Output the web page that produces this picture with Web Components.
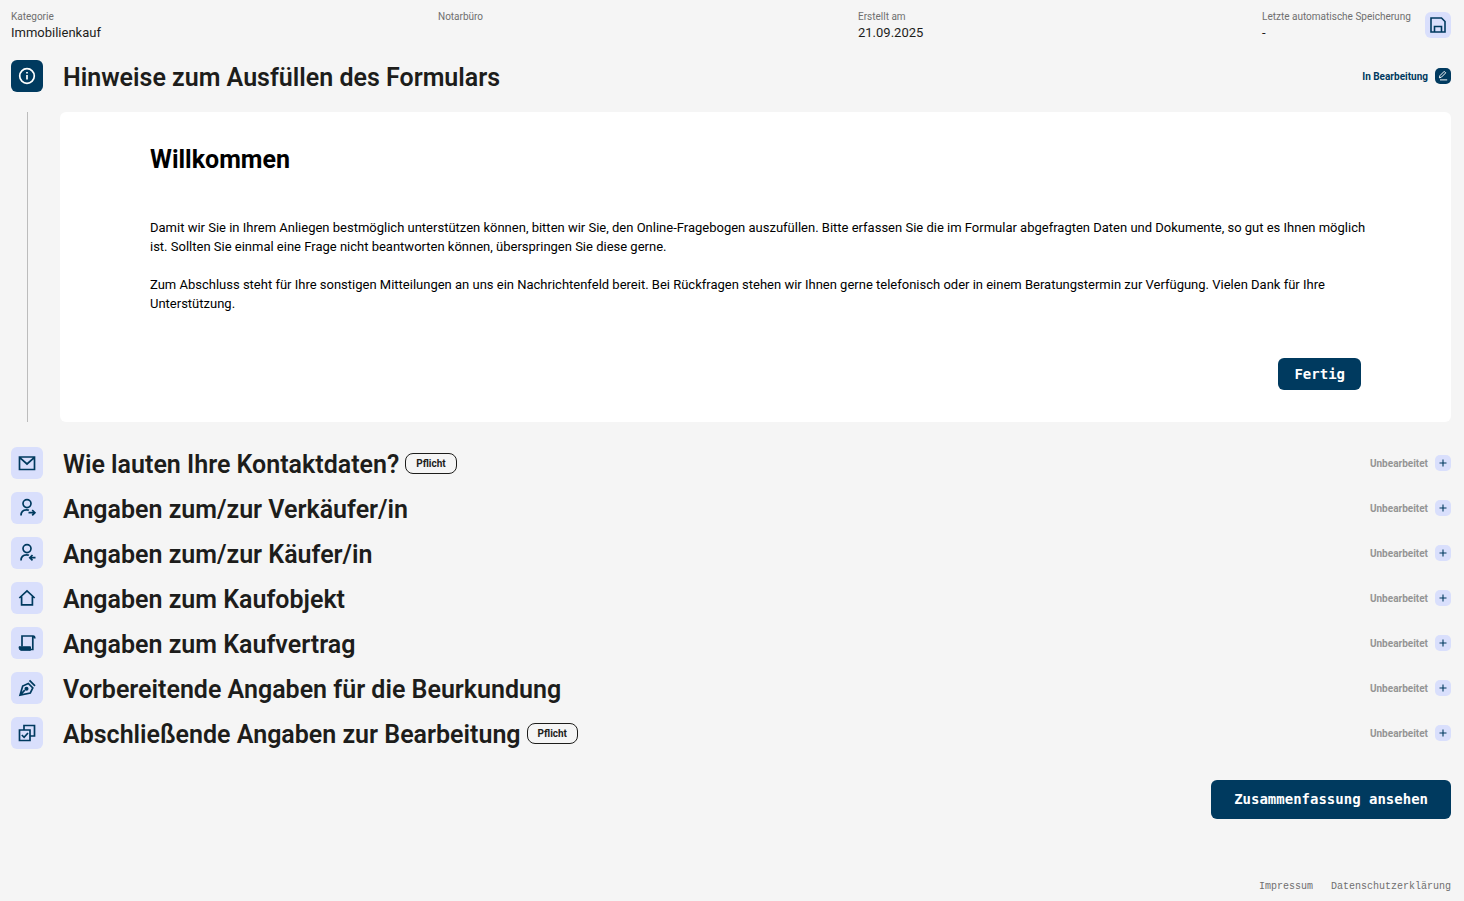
<!DOCTYPE html>
<html lang="de">
<head>
<meta charset="utf-8">
<meta name="viewport" content="width=device-width, initial-scale=1">
<title>Immobilienkauf</title>
<style>
  body { margin: 0; background: #f5f5f5; color: #1d1d1b; font: 13px/19px Roboto, "Liberation Sans", sans-serif; }
</style>
</head>
<body>
<form-page>
  <form-meta slot="meta"></form-meta>
  <form-section icon="info" heading="Hinweise zum Ausfüllen des Formulars" state="active">
    <welcome-panel>
      <h2 slot="title">Willkommen</h2>
      <p>Damit wir Sie in Ihrem Anliegen bestmöglich unterstützen können, bitten wir Sie, den Online-Fragebogen auszufüllen. Bitte erfassen Sie die im Formular abgefragten Daten und Dokumente, so gut es Ihnen möglich ist. Sollten Sie einmal eine Frage nicht beantworten können, überspringen Sie diese gerne.</p>
      <p>Zum Abschluss steht für Ihre sonstigen Mitteilungen an uns ein Nachrichtenfeld bereit. Bei Rückfragen stehen wir Ihnen gerne telefonisch oder in einem Beratungstermin zur Verfügung. Vielen Dank für Ihre Unterstützung.</p>
    </welcome-panel>
  </form-section>
  <form-section icon="mail" heading="Wie lauten Ihre Kontaktdaten?" required></form-section>
  <form-section icon="seller" heading="Angaben zum/zur Verkäufer/in"></form-section>
  <form-section icon="buyer" heading="Angaben zum/zur Käufer/in"></form-section>
  <form-section icon="house" heading="Angaben zum Kaufobjekt"></form-section>
  <form-section icon="scroll" heading="Angaben zum Kaufvertrag"></form-section>
  <form-section icon="pen" heading="Vorbereitende Angaben für die Beurkundung"></form-section>
  <form-section icon="checks" heading="Abschließende Angaben zur Bearbeitung" required></form-section>
  <action-button slot="actions" size="large">Zusammenfassung ansehen</action-button>
  <page-footer slot="footer"></page-footer>
</form-page>

<script>
const ICONS = {
  info: '<circle cx="10" cy="10" r="7.3"/><path d="M10 9v4.6M10 6v1.4"/>',
  mail: '<path d="M2.5 4h15v12.5h-15zM2.8 4.6L10 11l7.2-6.4"/>',
  seller: '<circle cx="10" cy="5.6" r="4"/><path d="M4 17.6c0-3.6 2.2-5.8 5.6-5.8 1 0 1.7.2 2.3.5M11.5 14.7h6M15.2 12l2.7 2.7-2.7 2.7"/>',
  buyer: '<circle cx="10" cy="5.6" r="4"/><path d="M4 17.6c0-3.6 2.2-5.8 5.6-5.8 1 0 1.7.2 2.3.5M18.5 14.7H13M15.5 12l-2.7 2.7 2.7 2.7"/>',
  house: '<path d="M2.3 10L10 2.8l7.7 7.2M4.6 8.5v8.3h10.8V8.5"/>',
  scroll: '<path d="M5 13.500V3h11q1.800 0 1.800 2.500M15.800 3v13.500H12"/><path d="M2 13.800h11.500v3.500H4Q2 17.300 2 13.800z" fill="currentColor" stroke-width="1"/>',
  pen: '<path d="M3 17.200l2.700-9.200 5.600-2.500 4.500 4.500-2.500 5zM3 17.200l4.800-5M12.500 2.300l5.500 5.500"/><circle cx="9.500" cy="10.800" r="1.200" fill="currentColor"/>',
  checks: '<path d="M2.500 7H13v10.500H2.500zM7 7V2.500h10.500V13H13M4.800 12l2.300 2.300 3.900-4.300"/>',
  save: '<path d="M3 3h10.500L17 6.500V17H3zM6.500 17v-5.500h7V17"/>',
  edit: '<path d="M4 13l.8-3.500L12 2.300l2.500 2.500-7.200 7.200zM5 16.500h12"/>',
  plus: '<path d="M10 3v14M3 10h14"/>'
};
const icon = (name, size, stroke) =>
  `<svg width="${size}" height="${size}" viewBox="0 0 20 20" fill="none" stroke="currentColor" stroke-width="${stroke}" aria-hidden="true">${ICONS[name]}</svg>`;

class BaseElement extends HTMLElement {
  connectedCallback() {
    if (this.shadowRoot) return;
    this.attachShadow({ mode: 'open' }).innerHTML = this.render();
  }
}

customElements.define('form-page', class extends BaseElement {
  render() {
    return `<style>
      :host { display: flex; flex-direction: column; box-sizing: border-box; min-height: 100vh; padding: 9px 13px 5px 11px; }
      main { display: flex; flex-direction: column; gap: 13px; padding-top: 19px; }
      .actions { display: flex; justify-content: flex-end; padding-top: 31px; }
      footer { margin-top: auto; }
    </style>
    <header><slot name="meta"></slot></header>
    <main><slot></slot></main>
    <div class="actions"><slot name="actions"></slot></div>
    <footer><slot name="footer"></slot></footer>`;
  }
});

customElements.define('form-meta', class extends BaseElement {
  render() {
    return `<style>
      :host { display: block; }
      dl { display: grid; grid-template-columns: 427fr 420fr 404fr 163fr; flex: 1; margin: 0; }
      .bar { display: flex; align-items: center; }
      dt { font-size: 10px; line-height: 16px; color: #6f6f6f; white-space: nowrap; }
      dd { margin: 0; line-height: 16px; min-height: 16px; }
      button { width: 26px; height: 26px; padding: 0; border: 0; border-radius: 6px; background: #d9dffc; color: #003a5f; display: grid; place-items: center; }
      svg { display: block; }
    </style>
    <div class="bar">
    <dl>
      <div><dt>Kategorie</dt><dd>Immobilienkauf</dd></div>
      <div><dt>Notarbüro</dt><dd></dd></div>
      <div><dt>Erstellt am</dt><dd>21.09.2025</dd></div>
      <div><dt>Letzte automatische Speicherung</dt><dd>-</dd></div>
    </dl>
    <button type="button" aria-label="Speichern">${icon('save', 20, 1.6)}</button>
    </div>`;
  }
});

customElements.define('form-section', class extends BaseElement {
  render() {
    const active = this.getAttribute('state') === 'active';
    return `<style>
      :host { display: block; }
      .head { display: flex; align-items: center; height: 32px; }
      .badge { display: grid; place-items: center; width: 32px; height: 32px; border-radius: 6px; background: #d9dffc; color: #003a5f; }
      .active .badge, .active .toggle { background: #003a5f; color: #fff; }
      svg { display: block; }
      h2 { margin: 0 6px 0 20px; padding-top: 4px; font-size: 25px; line-height: 28px; font-weight: 600; }
      .required { box-sizing: border-box; height: 21px; padding: 0 10px; border: 1px solid #1d1d1b; border-radius: 8px; font-size: 10px; line-height: 20px; font-weight: 700; }
      .status { margin-left: auto; display: flex; align-items: center; gap: 7px; font-size: 10px; font-weight: 700; line-height: 16px; color: #949494; }
      #state { padding-top: 2px; }
      .active .status { color: #003a5f; }
      .toggle { display: grid; place-items: center; width: 16px; height: 16px; padding: 0; border: 0; border-radius: 5px; background: #d9dffc; color: #003a5f; }
      .body { display: grid; grid-template-columns: 32px 1fr; gap: 17px; padding: 20px 0 12px; }
      .line { justify-self: center; width: 1px; background: #bcbcbc; }
    </style>
    <section class="${active ? 'active' : ''}">
      <div class="head">
        <span class="badge">${icon(this.getAttribute('icon'), 20, 1.7)}</span>
        <h2>${this.getAttribute('heading')}</h2>
        ${this.hasAttribute('required') ? '<span class="required">Pflicht</span>' : ''}
        <div class="status"><span id="state">${active ? 'In Bearbeitung' : 'Unbearbeitet'}</span>
          <button class="toggle" type="button" aria-labelledby="state">${active ? icon('edit', 12, 1.6) : icon('plus', 10, 2.2)}</button></div>
      </div>
      ${active ? '<div class="body"><span class="line"></span><slot></slot></div>' : ''}
    </section>`;
  }
});

customElements.define('welcome-panel', class extends BaseElement {
  render() {
    return `<style>
      :host { display: block; padding: 32px 84px 32px 90px; border-radius: 6px; background: #fff; color: #000; }
      ::slotted(h2) { margin: 0 0 42px; font-size: 25px; line-height: 32px; font-weight: 700; }
      ::slotted(p) { margin: 0 0 19px; }
      .foot { display: flex; justify-content: flex-end; padding: 26px 6px 0 0; }
    </style>
    <slot name="title"></slot><slot></slot>
    <div class="foot"><action-button>Fertig</action-button></div>`;
  }
});

customElements.define('action-button', class extends BaseElement {
  render() {
    return `<style>
      :host { display: block; }
      button { display: block; height: 32px; padding: 0 16px; border: 0; border-radius: 6px; background: #003a5f; color: #fff; font: 700 14px/32px "DejaVu Sans Mono", monospace; }
      :host([size="large"]) button { height: 39px; padding: 0 23px; line-height: 39px; }
    </style><button type="button"><slot></slot></button>`;
  }
});

customElements.define('page-footer', class extends BaseElement {
  render() {
    return `<style>
      :host { display: block; }
      nav { display: flex; justify-content: flex-end; gap: 18px; font: 10px/18px "Liberation Mono", monospace; }
      a { color: #6f6f6f; text-decoration: none; }
    </style><nav><a href="#impressum">Impressum</a><a href="#datenschutz">Datenschutzerklärung</a></nav>`;
  }
});
</script>
</body>
</html>
